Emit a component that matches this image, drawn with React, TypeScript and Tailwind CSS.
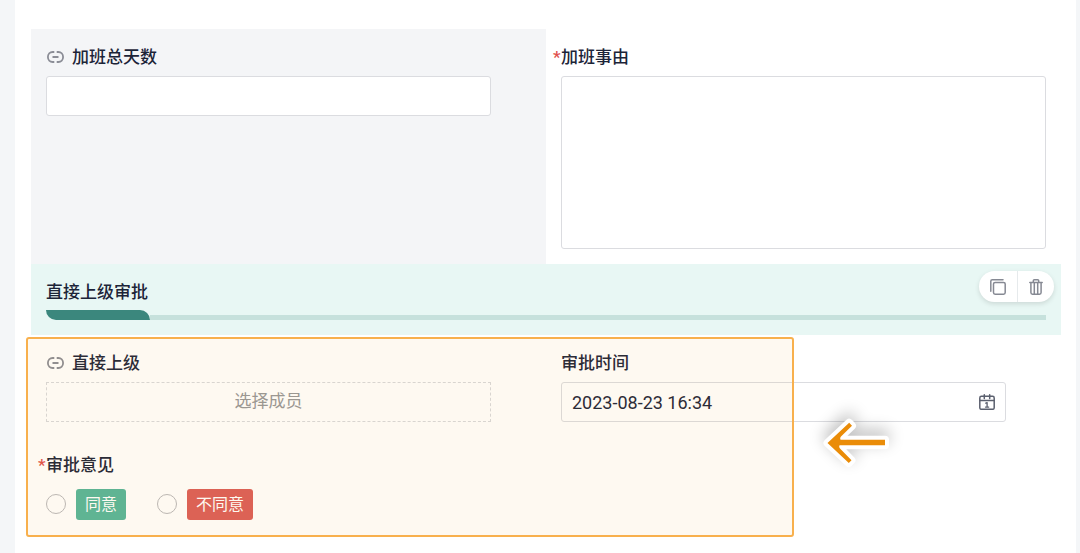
import { useState } from "react";
import type { ReactNode } from "react";
import clsx from "clsx";

const fieldClass =
  "block w-full rounded-[3px] border border-[#dbdce0] bg-white px-[10px] text-[18px] text-[#1c2438] outline-none";

const LinkIcon = () => (
  <svg
    className="mr-2 ml-px h-3 w-[17px] shrink-0"
    viewBox="0 0 17 12"
    fill="none"
    stroke="#8b8d96"
    strokeWidth="1.8"
    aria-hidden="true"
  >
    <path d="M7.3 1H5.6a4.7 5 0 0 0 0 10H7.3M9.7 1h1.7a4.7 5 0 0 1 0 10H9.7M5.5 6h6" />
  </svg>
);

const CopyIcon = () => (
  <svg
    className="size-4"
    viewBox="0 0 16 16"
    fill="none"
    stroke="#868993"
    strokeWidth="1.5"
    strokeLinecap="round"
    aria-hidden="true"
  >
    <rect x="3.5" y="3.5" width="11.7" height="11.7" rx="1.6" />
    <path d="M.8 12.2V2.2Q.8.8 2.2.8H13" />
  </svg>
);

const TrashIcon = () => (
  <svg
    className="h-4 w-[14px]"
    viewBox="0 0 14 16"
    fill="none"
    stroke="#868993"
    strokeWidth="1.5"
    strokeLinecap="round"
    strokeLinejoin="round"
    aria-hidden="true"
  >
    <path d="M.8 3.4h12.4M4.3 3.2V1.8q0-1 1-1h3.4q1 0 1 1v1.4M1.9 3.6v10q0 1.6 1.6 1.6h7q1.6 0 1.6-1.6v-10" />
    <path d="M5.3 4v11M8.7 4v11" />
  </svg>
);

const CalendarIcon = () => (
  <svg
    className="h-4 w-4"
    viewBox="0 0 16 16"
    fill="none"
    stroke="#5b606e"
    strokeWidth="1.5"
    strokeLinecap="round"
    strokeLinejoin="round"
    aria-hidden="true"
  >
    <rect x=".8" y="2.3" width="14.4" height="13" rx="1.6" />
    <path d="M1 6.5h14M5.3.8v3.6M10.7.8v3.6" />
    <path d="M6.8 9.2 8.1 8.6v4.4M6.5 13.1h3.2" strokeWidth="1.3" />
  </svg>
);

const arrowPath =
  "M17.5 54 39.2 33.8 42 36.8 31 47.5Q29.5 49 30.5 50.7H75v5.6H29.5Q28.5 58 30 59.5L41.5 71.2 38.8 74Z";

// orange pointer towards the highlighted fields
const Arrow = () => (
  <svg
    className="pointer-events-none absolute top-[54px] right-[121px] h-[110px] w-[130px] overflow-visible"
    viewBox="0 0 130 110"
    aria-hidden="true"
  >
    <defs>
      <filter id="arrow-shadow" filterUnits="userSpaceOnUse" x="-30" y="-30" width="160" height="160">
        <feGaussianBlur stdDeviation="8" />
      </filter>
    </defs>
    <g filter="url(#arrow-shadow)" opacity=".26">
      <path d={arrowPath} transform="translate(0 -6)" fill="#000" stroke="#000" strokeWidth="8" />
    </g>
    <path d={arrowPath} fill="#fff" stroke="#fff" strokeWidth="8" strokeLinejoin="round" />
    <path d={arrowPath} fill="#ea8c08" />
  </svg>
);

type FieldProps = {
  label: string;
  htmlFor?: string;
  linked?: boolean;
  required?: boolean;
  className?: string;
  children: ReactNode;
};

const Field = ({ label, htmlFor, linked, required, className, children }: FieldProps) => {
  const Label = htmlFor ? "label" : "div";
  return (
    <div className={clsx("px-[15px] pt-4 pb-[15px]", className)}>
      <Label
        htmlFor={htmlFor}
        className="mb-[7px] flex h-6 items-center text-[17px] leading-6 font-medium text-[#1c2438]"
      >
        {linked && <LinkIcon />}
        {required && <span className="-ml-2 w-2 text-[#e0504c]">*</span>}
        {label}
      </Label>
      {children}
    </div>
  );
};

const opinions = [
  { value: "agree", label: "同意", color: "bg-[#55b69b]" },
  { value: "reject", label: "不同意", color: "bg-[#db5e58]" },
];

const App = () => {
  const [opinion, setOpinion] = useState("");

  return (
    <div className="min-h-screen bg-[#f4f6f8] pr-1 pl-[15px] font-[Roboto,'Noto_Sans_CJK_SC',sans-serif]">
      <main className="min-h-screen bg-white pt-[29px] pr-[15px] pl-4">
        <div className="grid grid-cols-2">
          <Field label="加班总天数" htmlFor="days" linked className="bg-[#f4f5f7]">
            <div className="pr-10">
              <input id="days" type="text" className={clsx(fieldClass, "h-10")} />
            </div>
          </Field>
          <Field label="加班事由" htmlFor="reason" required>
            <textarea id="reason" className={clsx(fieldClass, "h-[173px] resize-none py-2")} />
          </Field>
        </div>

        <section className="relative bg-[#e8f7f4] px-[15px] pt-4 pb-[15px]">
          <h2 className="text-[17px] leading-6 font-medium text-[#1c2438]">直接上级审批</h2>
          <div className="mt-[6px] flex h-[10px] items-end">
            <div className="h-[10px] w-[104px] rounded-tr-[10px] rounded-bl-[10px] bg-[#3b877d]" />
            <div className="h-[5px] flex-1 bg-[#c6e1dc]" />
          </div>
          <div className="absolute top-[7px] right-[7px] flex h-[31px] rounded-full bg-white shadow-[0_2px_5px_rgba(0,0,0,0.12)]">
            <button type="button" aria-label="复制" className="flex w-[39px] items-center justify-center border-r border-[#e6eaec]">
              <CopyIcon />
            </button>
            <button type="button" aria-label="删除" className="flex w-9 items-center justify-center">
              <TrashIcon />
            </button>
          </div>
        </section>

        <div className="relative">
          <div className="grid grid-cols-2">
            <Field label="直接上级" htmlFor="manager" linked>
              <div className="pr-10">
                <button
                  id="manager"
                  type="button"
                  className="h-10 w-full border border-dashed border-[#d8d9dc] text-[17px] text-[#959699]"
                >
                  选择成员
                </button>
              </div>
            </Field>
            <Field label="审批时间" htmlFor="time">
              <div className="pr-10">
                <div className={clsx(fieldClass, "!flex h-10 items-center")}>
                  <input
                    id="time"
                    type="text"
                    defaultValue="2023-08-23 16:34"
                    className="min-w-0 flex-1 bg-transparent outline-none"
                  />
                  <button type="button" aria-label="选择日期">
                    <CalendarIcon />
                  </button>
                </div>
              </div>
            </Field>
          </div>

          <Field label="审批意见" required>
            <div role="radiogroup" aria-label="审批意见" className="flex h-10 items-center gap-[31px]">
              {opinions.map((item) => (
                <label key={item.value} className="flex items-center gap-[10px]">
                  <input
                    type="radio"
                    name="opinion"
                    value={item.value}
                    checked={opinion === item.value}
                    onChange={() => setOpinion(item.value)}
                    className="size-5 appearance-none rounded-full border border-[#b9b9bc] bg-white checked:border-[6px] checked:border-[#3b877d]"
                  />
                  <span className={clsx("rounded-[3px] px-[9px] pt-px text-[16px] leading-[30px] text-white", item.color)}>
                    {item.label}
                  </span>
                </label>
              ))}
            </div>
          </Field>

          <div className="pointer-events-none absolute top-[2px] right-[267px] bottom-[2px] -left-[5px] rounded-[3px] border-2 border-[#f8b04d] bg-[rgba(240,160,40,0.065)]" />
          <Arrow />
        </div>
      </main>
    </div>
  );
};

export default App;
